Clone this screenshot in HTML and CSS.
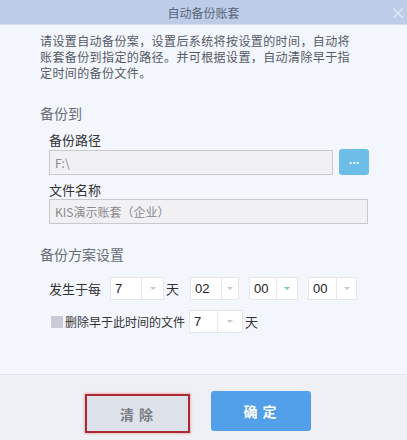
FILE: index.html
```html
<!DOCTYPE html>
<html>
<head>
<meta charset="utf-8">
<link rel="stylesheet" href="styles.css">
</head>
<body>
<div class="dialog">
  <div class="titlebar">
    <span class="title">自动备份账套</span>
    <span class="close">×</span>
  </div>
  <div class="content">
    <p class="intro">请设置自动备份案，设置后系统将按设置的时间，自动将<br>账套备份到指定的路径。并可根据设置，自动清除早于指<br>定时间的备份文件。</p>
    <div class="section-title">备份到</div>
    <div class="group">
      <div class="label">备份路径</div>
      <div class="path-row">
        <div class="input path">F:\</div>
        <div class="browse">...</div>
      </div>
      <div class="label label2">文件名称</div>
      <div class="input name">KIS演示账套（企业）</div>
    </div>
    <div class="section-title sec2">备份方案设置</div>
    <div class="group">
      <div class="row">
        <span class="rlabel">发生于每</span>
        <div class="select s1"><span class="val">7</span><span class="arrow"></span></div>
        <span class="unit">天</span>
        <div class="select s2"><span class="val">02</span><span class="arrow"></span></div>
        <div class="select s3"><span class="val">00</span><span class="arrow teal"></span></div>
        <div class="select s4"><span class="val">00</span><span class="arrow"></span></div>
      </div>
      <div class="row row2">
        <span class="check"></span>
        <span class="rlabel2">删除早于此时间的文件</span>
        <div class="select s5"><span class="val">7</span><span class="arrow"></span></div>
        <span class="unit">天</span>
      </div>
    </div>
  </div>
  <div class="footer">
    <button class="btn clear">清 除</button>
    <button class="btn ok">确 定</button>
  </div>
</div>
</body>
</html>
```

FILE: styles.css
```css
* { box-sizing: border-box; }
html, body { margin: 0; padding: 0; }
body {
  width: 407px;
  height: 440px;
  overflow: hidden;
  font-family: "Noto Sans CJK SC", "Noto Sans", sans-serif;
  background: #f3f6fd;
}
.dialog {
  width: 407px;
  height: 440px;
  display: flex;
  flex-direction: column;
}
.titlebar {
  height: 25px;
  background: #bdcde8;
  position: relative;
  display: flex;
  align-items: center;
  justify-content: center;
  border-bottom: 1px solid #d6e0f0;
}
.title {
  font-size: 12px;
  color: #5a6478;
  line-height: 25px;
}
.close {
  position: absolute;
  right: 1px;
  top: 3px;
  font-size: 16px;
  line-height: 18px;
  color: #e4ebf6;
}
.content {
  flex: 1;
  padding: 0 0 0 40px;
  background: #f3f6fd;
}
.intro {
  margin: 8px 0 0 0;
  font-size: 12px;
  line-height: 16px;
  color: #555a66;
  letter-spacing: 0.4px;
}
.section-title {
  margin-top: 22px;
  font-size: 14px;
  line-height: 20px;
  color: #6a6e78;
}
.sec2 { margin-top: 20px; }
.group { padding-left: 9px; }
.label {
  margin-top: 8px;
  font-size: 13px;
  line-height: 18px;
  color: #333;
}
.label2 { margin-top: 6px; }
.path-row {
  display: flex;
  align-items: center;
  gap: 6px;
}
.input {
  height: 25px;
  background: #f1f1f3;
  border: 1px solid #c9c9cc;
  font-size: 12px;
  line-height: 23px;
  color: #8a8a8e;
  padding-left: 5px;
}
.path { width: 284px; }
.name { width: 319px; }
.browse {
  width: 30px;
  height: 26px;
  background: #6dbde9;
  border-radius: 3px;
  color: #fff;
  font-size: 11px;
  line-height: 20px;
  text-align: center;
  font-weight: bold;
}
.row {
  margin-top: 13px;
  display: flex;
  align-items: center;
  height: 23px;
}
.row2 { margin-top: 10px; }
.rlabel {
  font-size: 13px;
  color: #333;
  width: 61px;
}
.rlabel2 {
  font-size: 12px;
  color: #333;
  margin-left: 2px;
  width: 124px;
}
.select {
  height: 23px;
  background: #fff;
  border: 1px solid #e6e6ea;
  display: flex;
}
.val {
  width: 31px;
  border-right: 1px solid #e6e6ea;
  font-size: 13px;
  line-height: 21px;
  padding-left: 4px;
  color: #222;
  font-family: "Liberation Sans", sans-serif;
}
.arrow {
  flex: 1;
  position: relative;
}
.arrow::after {
  content: "";
  position: absolute;
  left: 50%;
  top: 9px;
  margin-left: -3px;
  border-left: 3px solid transparent;
  border-right: 3px solid transparent;
  border-top: 3px solid #c8c8cc;
}
.arrow.teal::after { border-top-color: #7cc4b8; }
.s1 { width: 54px; }
.s2 { width: 49px; }
.s3 { width: 49px; }
.s3 .val { width: 27px; }
.s4 { width: 49px; }
.s4 .val { width: 28px; }
.s5 { width: 54px; }
.s5 .val { width: 28px; }
.unit {
  font-size: 13px;
  color: #333;
  margin: 0 11px 0 2px;
}
.s2 + .s3, .s3 + .s4 { margin-left: 10px; }
.check {
  width: 12px;
  height: 12px;
  background: #c9ccd8;
  margin-left: 2px;
}
.footer {
  height: 66px;
  background: #eef0f6;
  border-top: 1px solid #e2e6ef;
  display: flex;
  justify-content: center;
  align-items: flex-start;
  padding: 16px 12px 0 0;
  gap: 21px;
}
.btn {
  font-family: "Noto Sans CJK SC", sans-serif;
  font-size: 14px;
  font-weight: bold;
  border-radius: 3px;
  letter-spacing: 1px;
}
.clear {
  margin-top: 3px;
  width: 105px;
  height: 39px;
  background: #dde1ea;
  color: #7a7d84;
  border: 2px solid #a92a33;
  border-radius: 0;
  box-shadow: 0 0 2px 1px #f2b8bc;
}
.ok {
  width: 100px;
  height: 40px;
  background: #52a0ea;
  color: #fff;
  border: none;
}
```
